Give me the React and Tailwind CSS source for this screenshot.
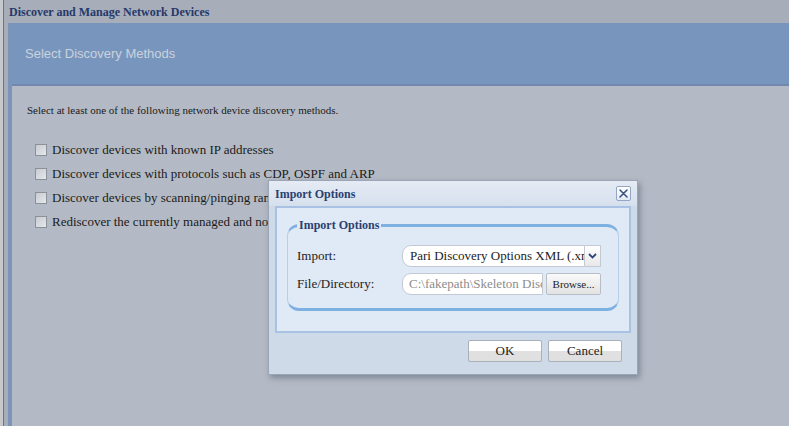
import React from 'react';

const serif = { fontFamily: '"Liberation Serif", "DejaVu Serif", serif' };

const methods = [
    'Discover devices with known IP addresses',
    'Discover devices with protocols such as CDP, OSPF and ARP',
    'Discover devices by scanning/pinging ranges of IP addresses',
    'Rediscover the currently managed and non-managed devices',
];

function ImportDialog() {
    return (
        <div className="absolute left-[268px] top-[180px] w-[370px] h-[195px] flex flex-col border border-[#9aa6b6] bg-[#cfdae8] shadow-[2px_3px_6px_rgba(60,70,90,0.45)]">
            {/* title bar */}
            <div className="h-[25px] flex items-center justify-between pl-[6px] pr-[6px] bg-gradient-to-b from-[#e4ebf4] to-[#d6e0ed]">
                <span className="text-[12px] font-bold text-[#2b3f70]" style={serif}>Import Options</span>
                <button className="w-[15px] h-[15px] flex items-center justify-center border border-[#93a6c2] rounded-[2px] bg-gradient-to-b from-white to-[#e3eaf3]">
                    <svg width="9" height="9" viewBox="0 0 9 9">
                        <path d="M1 1L8 8M8 1L1 8" stroke="#3d5386" strokeWidth="1.6" strokeLinecap="round" />
                    </svg>
                </button>
            </div>

            {/* content panel */}
            <div className="mx-[6px] h-[127px] border-2 border-[#a9c2e4] bg-[#e0e9f6] pt-[10px] px-[10px]">
                <fieldset className="h-[93px] border-x border-t-[3px] border-b-[3px] border-x-[#b9cfe8] border-t-[#7eb0e2] border-b-[#7eb0e2] rounded-[12px] px-[9px]">
                    <legend className="px-[2px] text-[12px] font-bold text-[#2b3f70] leading-[14px]" style={serif}>Import Options</legend>
                    <div className="flex flex-col gap-[6px] mt-[13px]" style={serif}>
                        <div className="flex items-center h-[22px]">
                            <span className="w-[105px] text-[13px] text-[#222]">Import:</span>
                            <input
                                readOnly
                                value="Pari Discovery Options XML (.xml)"
                                className="w-[183px] h-[22px] pl-[7px] bg-white border border-[#c3cad3] rounded-l-[9px] text-[13px] text-[#222] outline-none"
                                style={serif}
                            />
                            <div className="w-[16px] h-[22px] flex items-center justify-center border border-l-0 border-[#c3cad3] bg-gradient-to-b from-white to-[#e8e8e8]">
                                <svg width="9" height="6" viewBox="0 0 9 6">
                                    <path d="M1 1L4.5 4.5L8 1" stroke="#2c4577" strokeWidth="1.8" fill="none" />
                                </svg>
                            </div>
                        </div>
                        <div className="flex items-center h-[22px]">
                            <span className="w-[105px] text-[13px] text-[#222]">File/Directory:</span>
                            <input
                                readOnly
                                value="C:\fakepath\Skeleton Discovery.xml"
                                className="w-[141px] h-[22px] pl-[6px] bg-white border border-[#c3cad3] rounded-l-[9px] text-[13px] text-[#8c8c8c] outline-none"
                                style={serif}
                            />
                            <button className="ml-[3px] w-[55px] h-[22px] border border-[#b9bec5] rounded-[2px] bg-gradient-to-b from-[#fafafa] to-[#e2e2e2] text-[11px] text-[#222]">
                                Browse...
                            </button>
                        </div>
                    </div>
                </fieldset>
            </div>

            {/* footer */}
            <div className="flex justify-end gap-[6px] pr-[15px] pt-[7px]" style={serif}>
                <button className="w-[74px] h-[22px] border border-[#a9b0b8] rounded-[2px] bg-gradient-to-b from-white from-50% to-[#e0e0e0] to-50% text-[13px] text-[#222]">OK</button>
                <button className="w-[74px] h-[22px] border border-[#a9b0b8] rounded-[2px] bg-gradient-to-b from-white from-50% to-[#e0e0e0] to-50% text-[13px] text-[#222]">Cancel</button>
            </div>
        </div>
    );
}

export default function App() {
    return (
        <div className="relative w-[789px] h-[426px] overflow-hidden flex bg-[#b4bac5]">
            <div className="w-[3px] bg-[#c5c8cd]" />
            <div className="w-[1px] bg-[#6f7482]" />
            <div className="flex-1 flex flex-col">
                <div className="h-[23px] flex items-center pl-[5px] bg-[#a7aeb9] text-[12px] font-bold text-[#26396a]" style={serif}>
                    Discover and Manage Network Devices
                </div>
                <div className="flex-1 flex">
                    <div className="w-[4px] bg-[#a7aeb9]" />
                    <div className="flex-1 flex flex-col border-l-4 border-[#7d94ba]">
                        <div className="h-[63px] flex items-center pl-[13px] bg-[#7896bd] border-b-2 border-[#7288ae] text-[13px] text-[#c9d2de]" style={{ fontFamily: '"Liberation Sans", Arial, sans-serif' }}>
                            Select Discovery Methods
                        </div>
                        <div className="pl-[15px] pt-[16px]" style={serif}>
                            <p className="text-[11px] text-[#1a1a1a]">Select at least one of the following network device discovery methods.</p>
                            <div className="mt-[19px] pl-[8px] flex flex-col">
                                {methods.map((m) => (
                                    <label key={m} className="h-[24px] flex items-center gap-[5px] text-[13px] text-[#1a1a1a]">
                                        <span className="w-[12px] h-[12px] border border-[#8b9099] bg-gradient-to-br from-[#c7ccd3] to-[#e6e8eb]" />
                                        {m}
                                    </label>
                                ))}
                            </div>
                        </div>
                    </div>
                </div>
            </div>
            <ImportDialog />
        </div>
    );
}
